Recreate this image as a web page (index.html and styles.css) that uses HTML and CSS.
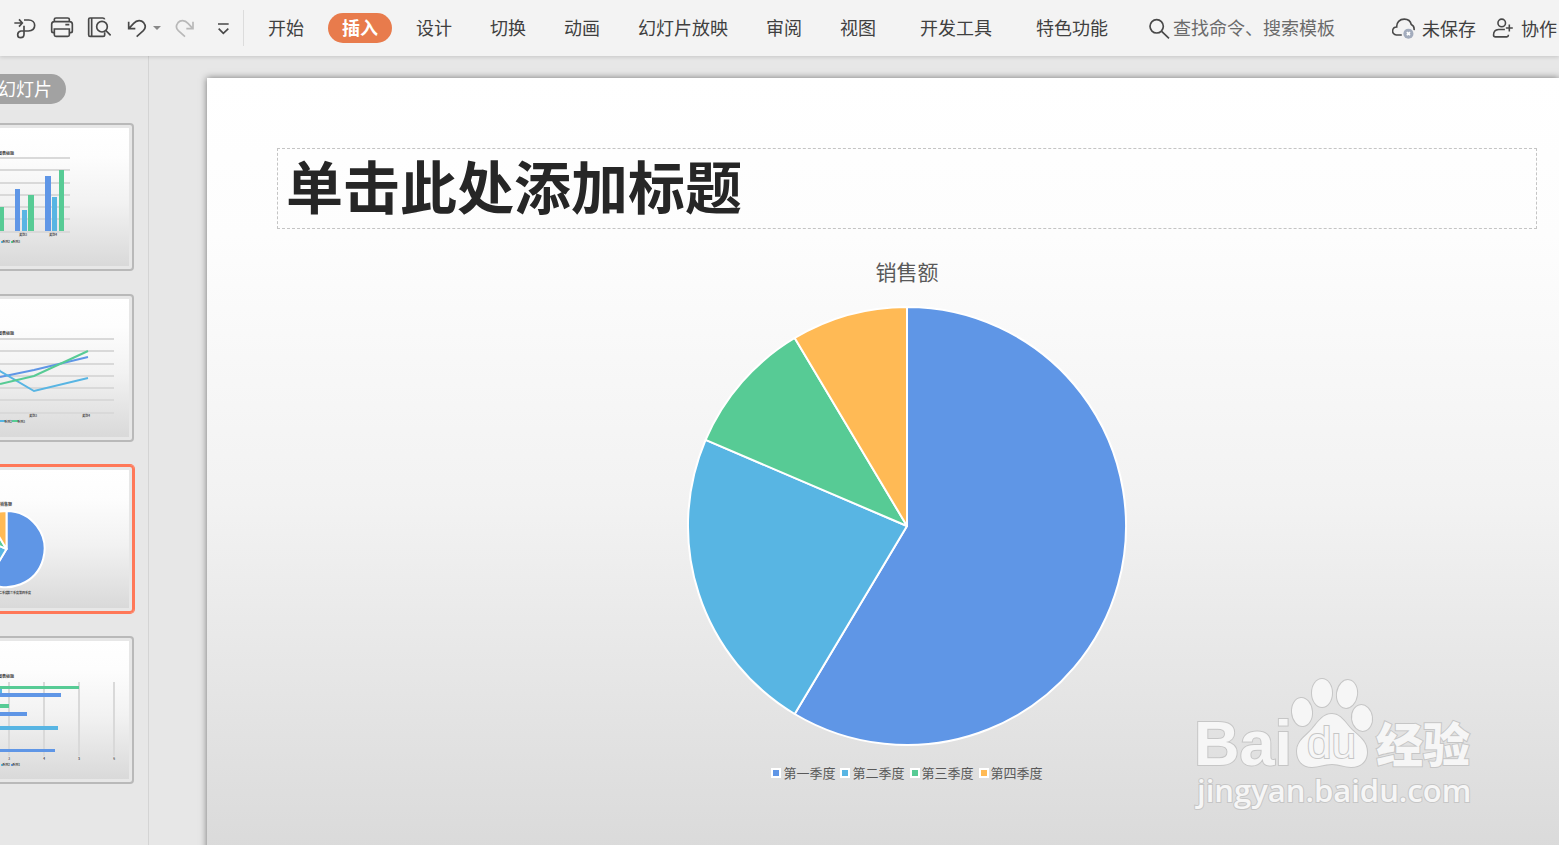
FILE: index.html
```
<!DOCTYPE html>
<html lang="zh-CN">
  <head>
    <meta charset="UTF-8" />
    <meta name="viewport" content="width=device-width, initial-scale=1.0" />
    <title>演示文稿</title>
    <link rel="stylesheet" href="styles.css">
  </head>
  <body>
    <header class="toolbar">
      <div class="quick">
        <button class="icon-btn" type="button" aria-label="输出为PDF">
          <svg viewBox="40 48 72 72"><path d="M44 69H67M58 58L68 69L58 80M73 60H87C98 60 105 67 105 76C105 87 97 93 86 93H64C57 94 54 98 54 104C54 110 58 113 63 113C69 113 73 109 73 103V77" /></svg>
        </button>
        <button class="icon-btn" type="button" aria-label="打印">
          <svg viewBox="150 48 72 72"><path d="M163 64V58Q163 54 168 54H203Q208 54 208 58V64M162 98H160Q155 98 155 93V73Q155 65 163 65H209Q217 65 217 73V93Q217 98 212 98H209M163 87H208V105Q208 109 203 109H168Q163 109 163 105ZM196 74H208" /></svg>
        </button>
        <button class="icon-btn" type="button" aria-label="打印预览">
          <svg viewBox="261 48 72 72"><path d="M314 58Q313 54 308 54H270Q266 54 266 58V104Q266 109 270 109H309Q314 109 314 104V97M275 54V109M317 91L332 106" /><circle cx="306" cy="80" r="16" /></svg>
        </button>
        <button class="icon-btn" type="button" aria-label="撤销">
          <svg viewBox="373 48 72 72"><path d="M387 65V86H407M388 85L402 70C412 59 425 60 432 68C439 77 437 86 431 92L411 110" /></svg>
        </button>
        <button class="icon-btn caret" type="button" aria-label="撤销列表">
          <svg viewBox="0 0 12 12"><path d="M2 4H10L6 8Z" /></svg>
        </button>
        <button class="icon-btn muted" type="button" aria-label="恢复">
          <svg viewBox="519 48 72 72"><path d="M579 65V86H559M578 85L564 70C554 59 541 60 534 68C527 77 529 86 535 92L555 110" /></svg>
        </button>
        <button class="icon-btn" type="button" aria-label="自定义快速访问">
          <svg viewBox="631 48 72 72"><path d="M655 72H687M657 86L671 100L686 86" /></svg>
        </button>
      </div>

      <nav class="tabs">
        <button class="tab" type="button">开始</button>
        <button class="tab active" type="button">插入</button>
        <button class="tab" type="button">设计</button>
        <button class="tab" type="button">切换</button>
        <button class="tab" type="button">动画</button>
        <button class="tab" type="button">幻灯片放映</button>
        <button class="tab" type="button">审阅</button>
        <button class="tab" type="button">视图</button>
        <button class="tab wide" type="button">开发工具</button>
        <button class="tab wide" type="button">特色功能</button>
      </nav>

      <label class="search">
        <svg viewBox="56 48 72 72"><circle cx="82" cy="79" r="20" /><path d="M97 94L119 115" /></svg>
        <input type="text" placeholder="查找命令、搜索模板" aria-label="查找命令、搜索模板">
      </label>

      <div class="status">
        <button class="status-btn" type="button">
          <svg viewBox="786 48 76 76"><path d="M817 108H800C792 107 787 101 788 94C789 87 794 83 801 83C800 68 810 58 825 58C837 58 845 65 847 75C854 78 857 84 856 93" /><circle class="badge" cx="838" cy="104" r="16" /><path class="cross" d="M833 99L843 109M843 99L833 109" /></svg>
          未保存
        </button>
        <button class="status-btn" type="button">
          <svg viewBox="1083 48 76 76"><circle cx="1117" cy="70" r="12" /><path d="M1127 91H1107C1097 92 1091 98 1091 108Q1091 114 1097 114H1133Q1138 114 1138 109V107M1130 86H1152M1141 75V97" /></svg>
          协作
        </button>
      </div>
    </header>

    <div class="workspace">
      <aside class="sidebar">
        <button class="mode" type="button">幻灯片</button>
        <div class="thumbs">
          <!-- 柱形图 -->
          <div class="thumb">
            <svg viewBox="0 0 129 138">
              <path class="grid" d="M0 30H70M0 42H70M0 55H70M0 67H70M0 79H70M0 91H70M0 104H70" />
              <path class="blue" d="M15 61h5v42h-5zM45 48h6v55h-6z" />
              <path class="cyan" d="M22 82h5v21h-5zM52 69h5v34h-5z" />
              <path class="green" d="M0 79h4v24h-4zM28 67h6v36h-6zM59 42h5v61h-5z" />
              <text class="name" x="14" y="27">图表标题</text>
              <text x="27" y="108">类别3</text>
              <text x="57" y="108">类别4</text>
              <path class="cyan" d="M1 113h2v2h-2z" />
              <path class="green" d="M11 113h2v2h-2z" />
              <text x="10" y="115">系列2</text>
              <text x="20" y="115">系列3</text>
            </svg>
          </div>
          <!-- 折线图 -->
          <div class="thumb">
            <svg viewBox="0 0 129 138">
              <path class="grid" d="M0 40H114M0 52H114M0 65H114M0 77H114M0 89H114M0 101H114M0 114H114" />
              <path class="line blue-line" d="M0 78L34 71L88 58" />
              <path class="line cyan-line" d="M-2 70L0 72L34 92L88 79" />
              <path class="line green-line" d="M0 85L34 77L88 52" />
              <text class="name" x="14" y="36">图表标题</text>
              <text x="37" y="118">类别3</text>
              <text x="90" y="118">类别4</text>
              <path class="line cyan-line" d="M0 122H5" />
              <path class="line green-line" d="M12 122H18" />
              <text x="12" y="124">系列2</text>
              <text x="25" y="124">系列3</text>
            </svg>
          </div>
          <!-- 饼图 -->
          <div class="thumb selected">
            <svg viewBox="0 0 129 138">
              <g class="slices">
                <path class="blue" d="M6.5 79V41A38 38 0 1 1 -13 111.6Z" />
                <path class="cyan" d="M6.5 79L-13 111.6A38 38 0 0 1 -28.4 64.1Z" />
                <path class="green" d="M6.5 79L-28.4 64.1A38 38 0 0 1 -13 46.4Z" />
                <path class="orange" d="M6.5 79L-13 46.4A38 38 0 0 1 6.5 41Z" />
              </g>
              <text class="name" x="12" y="36">销售额</text>
              <text x="8" y="124">第二季度</text>
              <text x="19" y="124">第三季度</text>
              <text x="31" y="124">第四季度</text>
            </svg>
          </div>
          <!-- 条形图 -->
          <div class="thumb">
            <svg viewBox="0 0 129 138">
              <path class="grid" d="M9 41V115M44 41V115M79 41V115M114 41V115" />
              <path class="green" d="M0 45h79v3h-79zM0 63h9v4h-9z" />
              <path class="cyan" d="M0 48h2v4h-2zM0 85h58v4h-58z" />
              <path class="blue" d="M0 52h61v4h-61zM0 71h27v4h-27zM0 108h55v3h-55z" />
              <text class="name" x="14" y="37">图表标题</text>
              <text x="10" y="119">3</text>
              <text x="45" y="119">4</text>
              <text x="80" y="119">5</text>
              <text x="115" y="119">6</text>
              <path class="cyan" d="M1 123h2v2h-2z" />
              <path class="blue" d="M11 123h2v2h-2z" />
              <text x="10" y="125">系列2</text>
              <text x="20" y="125">系列1</text>
            </svg>
          </div>
        </div>
      </aside>

      <main class="stage">
        <section class="slide">
          <h1 class="slide-title">单击此处添加标题</h1>
          <figure class="chart">
            <figcaption class="chart-title">销售额</figcaption>
            <svg class="pie" viewBox="0 0 444 444">
              <g class="slices">
                <path class="blue" d="M222 222V3A219 219 0 1 1 109.7 410Z" />
                <path class="cyan" d="M222 222L109.7 410A219 219 0 0 1 20.6 135.9Z" />
                <path class="green" d="M222 222L20.6 135.9A219 219 0 0 1 109.7 34Z" />
                <path class="orange" d="M222 222L109.7 34A219 219 0 0 1 222 3Z" />
              </g>
            </svg>
            <ul class="legend">
              <li><span class="swatch q1"></span>第一季度</li>
              <li><span class="swatch q2"></span>第二季度</li>
              <li><span class="swatch q3"></span>第三季度</li>
              <li><span class="swatch q4"></span>第四季度</li>
            </ul>
          </figure>
        </section>

        <svg class="watermark" viewBox="0 0 290 140">
          <text class="brand" x="2" y="91">Bai</text>
          <ellipse cx="110" cy="38" rx="10" ry="14" transform="rotate(-5 110 38)" />
          <ellipse cx="130" cy="19" rx="10" ry="14" />
          <ellipse cx="155" cy="20" rx="10" ry="14" transform="rotate(8 155 20)" />
          <ellipse cx="170" cy="44" rx="10" ry="13" transform="rotate(-8 170 44)" />
          <path d="M140 40C149 40 153 49 160 56C168 63 175 68 175 78C175 88 168 93 159 93C152 93 148 90 140 90C132 90 127 93 120 93C111 93 105 87 105 77C105 66 115 62 121 54C127 47 131 40 140 40Z" />
          <text class="du" x="115" y="84">du</text>
          <text class="brand-cn" x="184" y="88">经验</text>
          <text class="url" x="5" y="128">jingyan.baidu.com</text>
        </svg>
      </main>
    </div>
  </body>
</html>
```
FILE: styles.css
```
* {
  box-sizing: border-box;
}
body {
  margin: 0;
  height: 100vh;
  display: flex;
  flex-direction: column;
  overflow: hidden;
  font-family: "Noto Sans CJK SC", sans-serif;
  font-size: 18px;
  color: #404040;
  background: #e7e7e7;
}
button {
  border: none;
  padding: 0;
  background: none;
  font: inherit;
  color: inherit;
}

/* 顶部工具栏 */
.toolbar {
  position: relative;
  z-index: 1;
  display: flex;
  align-items: center;
  flex: none;
  height: 56px;
  padding: 0 2px 0 13px;
  background: #f3f3f3;
  box-shadow: 0 1px 4px rgba(0, 0, 0, 0.15);
  white-space: nowrap;
}
.toolbar svg {
  display: block;
  width: 24px;
  height: 24px;
  flex: none;
  fill: none;
  stroke: #484848;
  stroke-width: 5;
}
.quick {
  display: flex;
  align-items: center;
  gap: 13px;
  height: 36px;
  padding-right: 9px;
  border-right: 1px solid #dcdcdc;
}
.toolbar .caret svg {
  width: 12px;
  height: 12px;
  fill: #888;
  stroke: none;
}
.caret {
  margin: 0 -3px 0 -10px;
}
.toolbar .muted svg {
  stroke: #b8b8b8;
}
.tabs {
  display: flex;
  gap: 10px;
  margin-left: 10px;
}
.tab {
  height: 30px;
  padding: 0 14px 2px;
  border-radius: 15px;
  line-height: 28px;
}
.tab.active {
  background: #e87b4c;
  color: #fff;
  font-weight: bold;
}
.tab.wide {
  margin-left: 6px;
}
.search {
  display: flex;
  align-items: center;
  gap: 1px;
  margin-left: 26px;
}
.search input {
  width: 180px;
  border: none;
  padding: 0 0 2px;
  background: none;
  font: inherit;
}
.search input::placeholder {
  color: #6b6b6b;
}
.status {
  display: flex;
  gap: 15px;
  margin-left: auto;
}
.status-btn {
  display: flex;
  align-items: center;
  gap: 6px;
}
.toolbar .badge {
  fill: #a3acbd;
  stroke: none;
}
.toolbar .cross {
  stroke: #fff;
}

/* 左侧缩略图 */
.workspace {
  display: flex;
  flex: 1;
  min-height: 0;
}
.sidebar {
  flex: none;
  width: 149px;
  padding-top: 18px;
  border-right: 1px solid #d4d4d4;
  overflow: hidden;
}
.mode {
  display: block;
  height: 30px;
  margin-left: -16px;
  padding: 0 14px 2px;
  border-radius: 15px;
  background: #a2a2a2;
  color: #fff;
  line-height: 28px;
}
.thumbs {
  display: flex;
  flex-direction: column;
  gap: 23px;
  margin-top: 19px;
}
.thumb {
  width: 134px;
  padding: 3px 3px 3px 0;
  border: 2px solid #b9b9b9;
  border-left: none;
  border-radius: 0 4px 4px 0;
}
.thumb.selected {
  border-color: #ff7858;
  box-shadow: 0 0 0 1px #ff7858;
}
.thumb svg {
  display: block;
  width: 129px;
  height: 138px;
}
.thumb svg,
.slide {
  background: linear-gradient(#fff, #fdfdfd 20%, #f2f2f2 54%, #d9d9d9);
}
.thumb text {
  font-size: 3px;
  font-weight: bold;
  text-anchor: end;
  fill: #444;
}
.thumb .name {
  font-size: 4px;
}
.grid {
  fill: none;
  stroke: #d9d9d9;
  stroke-width: 2;
}
.line {
  fill: none;
  stroke-width: 2;
}
.blue-line {
  stroke: #5f96e6;
}
.cyan-line {
  stroke: #58b5e3;
}
.green-line {
  stroke: #57cb95;
}
.blue {
  fill: #5f96e6;
}
.cyan {
  fill: #58b5e3;
}
.green {
  fill: #57cb95;
}
.orange {
  fill: #ffba55;
}
.slices {
  stroke: #fff;
  stroke-width: 2;
  stroke-linejoin: round;
}

/* 编辑区 */
.stage {
  position: relative;
  flex: 1;
  min-width: 0;
  padding: 22px 0 0 58px;
  overflow: hidden;
}
.slide {
  min-height: 788px;
  padding: 70px 22px 0 70px;
  box-shadow: 0 0 7px rgba(0, 0, 0, 0.5);
}
.slide-title {
  margin: 0;
  padding: 0 0 8px 8px;
  border: 1px dashed #c4c4c4;
  font-size: 57px;
  line-height: 71px;
  color: #262626;
}
.chart {
  display: flex;
  flex-direction: column;
  align-items: center;
  margin: 26px 0 0;
  color: #595959;
}
.chart-title {
  font-size: 21px;
  line-height: 32px;
}
.pie {
  width: 444px;
  height: 444px;
  margin-top: 17px;
}
.legend {
  display: flex;
  gap: 5px;
  margin: 15px 0 0;
  padding: 0;
  list-style: none;
  font-size: 13px;
  line-height: 20px;
}
.legend li {
  display: flex;
  align-items: center;
  gap: 2px;
}
.swatch {
  width: 10px;
  height: 10px;
  border: 2px solid #fff;
}
.q1 {
  background: #5f96e6;
}
.q2 {
  background: #58b5e3;
}
.q3 {
  background: #57cb95;
}
.q4 {
  background: #ffba55;
}

/* 水印 */
.watermark {
  position: absolute;
  right: 77px;
  bottom: 31px;
  width: 290px;
  height: 140px;
  fill: #f6f6f6;
  stroke: #c6c6c6;
  stroke-width: 2;
  paint-order: stroke;
}
.brand {
  font: bold 63px "Liberation Sans", sans-serif;
}
.du {
  font: 44px "Liberation Sans", sans-serif;
}
.brand-cn {
  font-size: 47px;
  font-weight: 900;
}
.url {
  font: 600 31px "Open Sans", sans-serif;
}
```
